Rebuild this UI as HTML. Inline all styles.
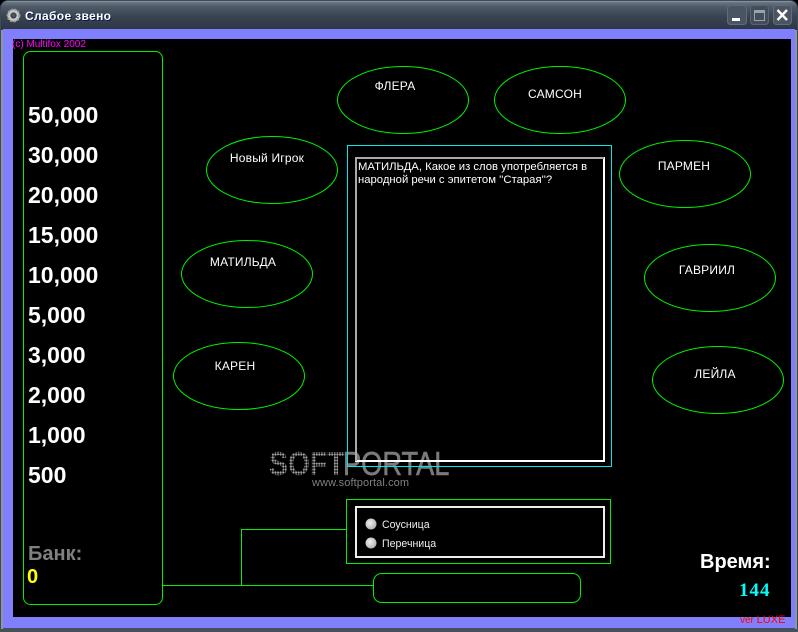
<!DOCTYPE html>
<html><head><meta charset="utf-8">
<style>
html,body{margin:0;padding:0;background:#000;width:798px;height:632px;overflow:hidden}
body{position:relative;font-family:"Liberation Sans",sans-serif}
div{position:absolute;box-sizing:border-box}
.t{white-space:nowrap;color:#fff;line-height:1}
.m{font-size:23px;font-weight:bold;left:28px}
.n{font-size:12px;transform:translateX(-50%);letter-spacing:.2px}
</style></head>
<body>
<div style="left:0;top:0;width:798px;height:632px;background:#3f4a56;border-radius:8px 8px 0 0"></div>
<div style="left:1px;top:1px;width:796px;height:30px;border-radius:7px 7px 0 0;background:linear-gradient(#a4adb8 0,#6d7885 3%,#4d5966 20%,#3a4553 50%,#2a3442 100%)"></div>
<div style="left:3px;top:29px;width:792px;height:599px;background:#8080ff"></div>
<div style="left:0;top:628px;width:798px;height:4px;background:#46505c"></div>
<div style="left:1px;top:30px;width:2px;height:599px;background:#8d96a1"></div>
<div style="left:795px;top:30px;width:2px;height:599px;background:#8d96a1"></div>
<div style="left:13px;top:39px;width:778px;height:578px;background:#000"></div>

<svg style="position:absolute;left:6px;top:8px" width="15" height="15" viewBox="0 0 15 15"><circle cx="7.5" cy="7.5" r="4.6" fill="none" stroke="#c8c8c8" stroke-width="3"/><circle cx="7.5" cy="7.5" r="6" fill="none" stroke="#999" stroke-width="2" stroke-dasharray="2 1.6"/><circle cx="7.5" cy="7.5" r="1.6" fill="#555"/></svg>
<div class="t" style="left:25px;top:10px;font-size:12px;font-weight:bold;letter-spacing:.35px;text-shadow:1px 1px 0 #0a1a50">Слабое звено</div>

<svg style="position:absolute;left:726px;top:4px" width="70" height="24" viewBox="0 0 70 24">
<rect x="1.500" y="1.500" width="19" height="19" rx="3" fill="#4a5563" stroke="#626c79"/>
<rect x="24.500" y="1.500" width="18" height="19" rx="3" fill="#434e5c" stroke="#5a6471"/>
<rect x="47.500" y="1.500" width="18" height="19" rx="3" fill="#4a5563" stroke="#626c79"/>
<rect x="6" y="14" width="8" height="3" fill="#fff"/>
<rect x="28.500" y="6.500" width="10" height="10" fill="none" stroke="#9aa3ad"/>
<rect x="28" y="6" width="11" height="3" fill="#9aa3ad"/>
<path d="M51.500 6L61 16M61 6L51.500 16" stroke="#fff" stroke-width="2.400" fill="none"/>
</svg>

<div class="t" style="left:12px;top:40px;font-size:10px;color:#f0f">(c) Multifox 2002</div>

<div class="t" style="left:269px;top:447px;font-size:33px;font-weight:bold;color:transparent;transform:scaleX(.86);transform-origin:0 0;background:radial-gradient(circle,#a0a0a0 1.1px,transparent 1.4px) 0 0/3px 3px;-webkit-background-clip:text;background-clip:text">SOFT</div>
<div class="t" style="left:343px;top:447px;font-size:33px;color:#7a7a7a;-webkit-text-stroke:.6px #7a7a7a;transform:scaleX(.825);transform-origin:0 0">PORTAL</div>
<div class="t" style="left:312px;top:478px;font-size:11px;color:#808080;letter-spacing:.1px">www.softportal.com</div>

<svg style="position:absolute;left:0;top:0" width="798" height="632" shape-rendering="crispEdges">
<g fill="none" stroke="#00f000" stroke-width="1" shape-rendering="auto">
<rect x="23.500" y="51.500" width="139" height="553" rx="7"/>
<rect x="373.500" y="573.500" width="207" height="29" rx="8"/>
<ellipse cx="403" cy="100" rx="65.500" ry="33.500"/>
<ellipse cx="560" cy="100" rx="65.500" ry="33.500"/>
<ellipse cx="272" cy="170" rx="65.500" ry="33.500"/>
<ellipse cx="685" cy="174" rx="65.500" ry="33.500"/>
<ellipse cx="247" cy="274" rx="65.500" ry="33.500"/>
<ellipse cx="710" cy="278" rx="65.500" ry="33.500"/>
<ellipse cx="239" cy="376" rx="65.500" ry="33.500"/>
<ellipse cx="718" cy="380" rx="65.500" ry="33.500"/>
</g>
<g fill="none" stroke="#00f000" stroke-width="1">
<path d="M163 585.500H373M241.500 585V529.500H346"/>
<rect x="346.500" y="499.500" width="264" height="64"/>
</g>
<rect x="347.500" y="145.500" width="264" height="321" fill="none" stroke="#00e8e8"/>
<rect x="356" y="158" width="248" height="303" fill="none" stroke="#fff" stroke-width="2"/>
<path d="M355 158H604M356 157V461" stroke="#aaa" stroke-width="2" fill="none"/>
<rect x="356" y="507" width="248" height="50" fill="none" stroke="#eee" stroke-width="2"/>
</svg>

<div class="t m" style="top:104px">50,000</div>
<div class="t m" style="top:144px">30,000</div>
<div class="t m" style="top:184px">20,000</div>
<div class="t m" style="top:224px">15,000</div>
<div class="t m" style="top:264px">10,000</div>
<div class="t m" style="top:304px">5,000</div>
<div class="t m" style="top:344px">3,000</div>
<div class="t m" style="top:384px">2,000</div>
<div class="t m" style="top:424px">1,000</div>
<div class="t m" style="top:464px">500</div>

<div class="t" style="left:28px;top:544px;font-size:20px;font-weight:bold;color:#808080">Банк:</div>
<div class="t" style="left:27px;top:567px;font-size:20px;font-weight:bold;color:#ff0">0</div>

<div class="t n" style="left:395px;top:80px">ФЛЕРА</div>
<div class="t n" style="left:555px;top:88px">САМСОН</div>
<div class="t n" style="left:267px;top:152px">Новый Игрок</div>
<div class="t n" style="left:684px;top:160px">ПАРМЕН</div>
<div class="t n" style="left:243px;top:256px">МАТИЛЬДА</div>
<div class="t n" style="left:707px;top:264px">ГАВРИИЛ</div>
<div class="t n" style="left:235px;top:360px">КАРЕН</div>
<div class="t n" style="left:715px;top:368px">ЛЕЙЛА</div>

<div class="t" style="left:358px;top:161px;font-size:11.300px;line-height:13px">МАТИЛЬДА, Какое из слов употребляется в<br>народной речи с эпитетом ''Старая''?</div>

<svg style="position:absolute;left:364px;top:517px" width="14" height="34"><defs><radialGradient id="r" cx=".4" cy=".4" r=".7"><stop offset="0" stop-color="#f0f0f0"/><stop offset="1" stop-color="#aaa"/></radialGradient></defs><circle cx="7" cy="7" r="5.500" fill="url(#r)"/><circle cx="7" cy="26" r="5.500" fill="url(#r)"/></svg>
<div class="t" style="left:382px;top:520px;font-size:10.600px;color:#eee">Соусница</div>
<div class="t" style="left:382px;top:539px;font-size:10.600px;color:#eee">Перечница</div>

<div class="t" style="left:700px;top:552px;font-size:20px;font-weight:bold">Время:</div>
<div class="t" style="left:739px;top:581px;font-size:19px;font-weight:bold;color:#0ff;font-family:'Liberation Serif',serif;letter-spacing:1px">144</div>
<div class="t" style="left:740px;top:615px;font-size:10px;color:#f00">ver <span style="font-size:11px">LUXE</span></div>
</body></html>
